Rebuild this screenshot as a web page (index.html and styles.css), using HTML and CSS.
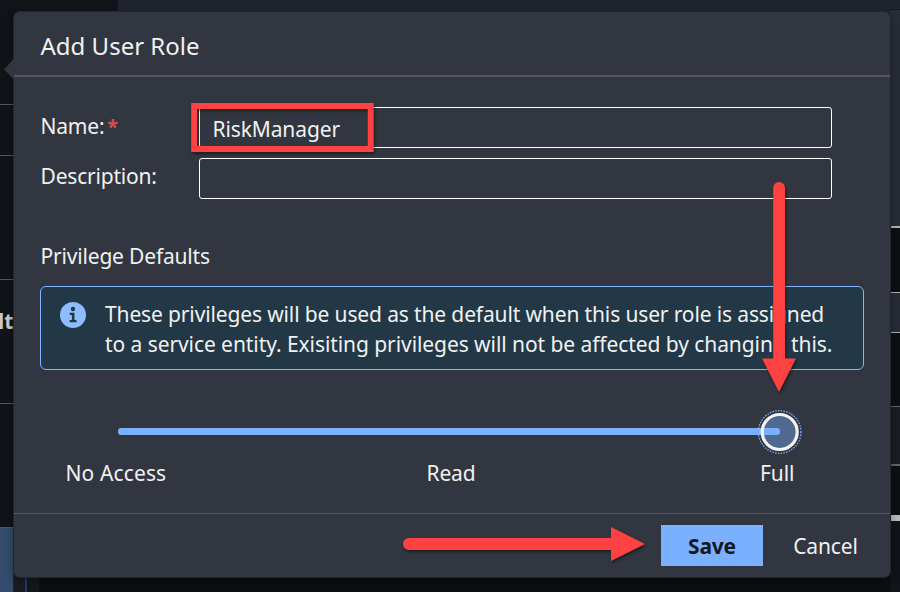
FILE: index.html
```html
<!DOCTYPE html>
<html lang="en">
<head>
<meta charset="utf-8">
<title>Add User Role</title>
<link rel="stylesheet" href="styles.css">
</head>
<body>
<div class="page">
  <aside class="side">
    <div class="side-row r1"></div>
    <div class="side-row r2"></div>
    <div class="side-row r3"></div>
    <div class="side-row r4"><span>lt</span></div>
    <div class="side-row r5"></div>
    <div class="side-selected"></div>
  </aside>
  <main class="backdrop">
    <div class="topbar"><i></i></div>
    <div class="backdrop-bottom"><i></i><b></b></div>
  </main>
  <aside class="rail">
    <div class="c1"></div><div class="c2"></div><div class="c3"></div><div class="c4"></div>
    <div class="c5"></div><div class="c6"></div><div class="c7"></div><div class="c8"></div>
  </aside>
</div>

<section class="dialog" role="dialog">
  <header class="dialog-head"><h1>Add User Role</h1></header>
  <div class="dialog-body">
    <div class="field">
      <label for="name"><span class="t-name">Name:</span><span class="req">*</span></label>
      <div class="input" id="name"><span class="t-risk">RiskManager</span></div>
    </div>
    <div class="field">
      <label for="desc" class="label-desc"><span class="t-desc">Description:</span></label>
      <div class="input" id="desc"></div>
    </div>
    <h2><span class="t-priv">Privilege Defaults</span></h2>
    <div class="info">
      <svg width="26" height="26" viewBox="0 0 26 26"><circle cx="13" cy="13" r="13" fill="#8fbcff"/><circle cx="13" cy="7" r="2.200" fill="#22384a"/><path d="M9.800 10.800h4.700v7.200h2V20.200H9.600V18h2.300v-5H9.800z" fill="#22384a"/></svg>
      <p><span class="t-l1">These privileges will be used as the default when this user role is assigned</span><br><span class="t-l2">to a service entity. Exisiting privileges will not be affected by changing this.</span></p>
    </div>
    <div class="slider"><div class="track"></div></div>
    <div class="ticks"><span class="t-no">No Access</span><span class="t-read">Read</span><span class="t-full">Full</span></div>
  </div>
  <footer class="dialog-foot">
    <button class="save"><span>Save</span></button>
    <button class="cancel"><span>Cancel</span></button>
  </footer>
</section>

<svg class="marks" width="900" height="592" viewBox="0 0 900 592">
  <path d="M14.500 58L4 69.500L14.500 80z" fill="#313640"/>
  <circle cx="779.7" cy="432" r="17.500" fill="#7bb0ff" fill-opacity=".42" stroke="#f4f4f4" stroke-width="3.200"/>
  <circle cx="779.7" cy="432" r="21.300" fill="none" stroke="#7bb0ff" stroke-width="1.300" stroke-dasharray="1.500 1.300"/>
  <g class="callout">
    <rect x="194.200" y="106" width="176.500" height="43" fill="none" stroke="#ff4141" stroke-width="6"/>
    <path d="M773.200 188a5.900 5.900 0 0 1 11.800 0V358.500h11L779 392L762 358.500h11.200z" fill="#ff4141"/>
    <path d="M409 538h202V527l34 17l-34 17V550H409a6 6 0 0 1 0-12z" fill="#ff4141"/>
  </g>
</svg>
</body>
</html>
```
FILE: styles.css
```css
* { box-sizing: border-box; }
body { margin: 0; width: 900px; height: 592px; overflow: hidden; background: #0d0f13; font: 21px/30px "Noto Sans", "Open Sans", sans-serif; color: #f1f1f1; }
.page { display: flex; height: 592px; }
.side { width: 14px; display: flex; flex-direction: column; background: #101318; overflow: hidden; }
.side-row { border-bottom: 1px solid #55575b; }
.r1 { height: 105px; }
.r2 { height: 51px; }
.r3 { height: 124px; }
.r4 { height: 124px; padding-top: 26px; color: #c8c8c8; font-weight: 700; }
.r4 span { display: block; margin-left: -2px; }
.r5 { height: 124px; }
.side-selected { flex: 1; background: #344b6c; border-right: 1px solid #1d2533; }
.backdrop { flex: 1; display: flex; flex-direction: column; justify-content: space-between; }
.topbar { height: 20px; background: #20242d; }
.topbar i { display: block; width: 104px; height: 20px; background: #111419; }
.backdrop-bottom { height: 20px; display: flex; background: #0c0e12; }
.backdrop-bottom i { width: 13px; background: #191c22; border-right: 2px solid #223a70; }
.backdrop-bottom b { width: 12px; background: #14171b; }
.rail { width: 10px; display: flex; flex-direction: column; background: #0d0f13; }
.rail div { border-bottom: 1px solid #606266; }
.c1 { height: 10px; background: #20242d; }
.rail .c1 { border-color: #14171c; }
.c2 { height: 218px; background: #282c36; }
.rail .c2, .rail .c3, .rail .c4 { border-color: #b0b0b2; }
.rail .c2 { border-bottom-width: 2px; }
.c3 { height: 65px; }
.c4 { height: 40px; background: #282c36; }
.c5 { height: 74px; }
.c6 { height: 59px; background: #1a1d23; }
.rail .c6 { border-bottom-width: 2px; }
.c7 { height: 55px; }
.rail .c7 { border-bottom: 6px solid #b9b9b9; }
.rail .c8 { flex: 1; border: 0; background: #101318; }

.dialog { position: absolute; left: 14px; top: 12px; width: 876px; height: 565px; display: flex; flex-direction: column; background: #313640; border-radius: 6px; box-shadow: 0 0 0 1px #22272f, 0 3px 8px rgba(0,0,0,.4); }
.dialog-head { height: 65px; border-bottom: 2px solid #575757; padding: 19px 26px 0 26.5px; }
h1 { margin: 0; font-size: 24px; line-height: 30px; font-weight: 400; }
.dialog-body { flex: 1; padding: 30px 26px 0; }
.field { display: flex; height: 41px; margin-bottom: 10px; }
label { width: 159px; padding: 4px 0 0 .5px; }
.label-desc { padding-top: 3px; }
.req { margin-left: 3px; color: #d94c4c; font-weight: 700; font-size: 20px; }
.input { width: 633px; height: 41px; border: 1px solid #fff; border-radius: 3px; padding: 6px 12.500px; }
h2 { margin: 42px 0 0 .5px; font: inherit; line-height: 30px; }
.info { display: flex; width: 824px; height: 84px; margin-top: 15px; border: 1px solid #83b2ff; border-radius: 6px; background: #223847; padding: 12px 0 0 19px; }
.info svg { margin-top: 3px; }
.info p { margin: 0 0 0 19px; white-space: nowrap; }
.slider { height: 66px; padding: 58px 0 0 78px; }
.track { width: 662px; height: 7px; border-radius: 3px; background: #7bb0ff; }
.ticks { display: grid; grid-template-columns: 361px 333.500px auto; padding: 22px 0 0 25.500px; }
.dialog-foot { height: 64px; border-top: 1px solid #5b5959; display: flex; justify-content: flex-end; align-items: flex-start; padding: 11px 12px 0 0; }
button { border: 0; border-radius: 0; height: 41px; font: inherit; background: none; color: inherit; padding: 0; }
.save { width: 102px; background: #7bb0ff; color: #14181f; font-weight: 700; letter-spacing: -.2px; }
.cancel { width: 115px; padding-left: 10px; letter-spacing: -.15px; }
.t-name { letter-spacing: -.2px; }
.t-desc { letter-spacing: -.2px; }
.t-risk { letter-spacing: -.12px; }
.t-priv { letter-spacing: -.18px; }
.t-l1 { letter-spacing: -.135px; }
.t-l2 { letter-spacing: -.07px; }
.t-no { letter-spacing: .12px; }
.t-read { letter-spacing: -.15px; }
.t-full { letter-spacing: -.1px; }
.marks { position: absolute; left: 0; top: 0; }
.callout { filter: drop-shadow(1px 2px 1.500px rgba(0,0,0,.45)); }
```
